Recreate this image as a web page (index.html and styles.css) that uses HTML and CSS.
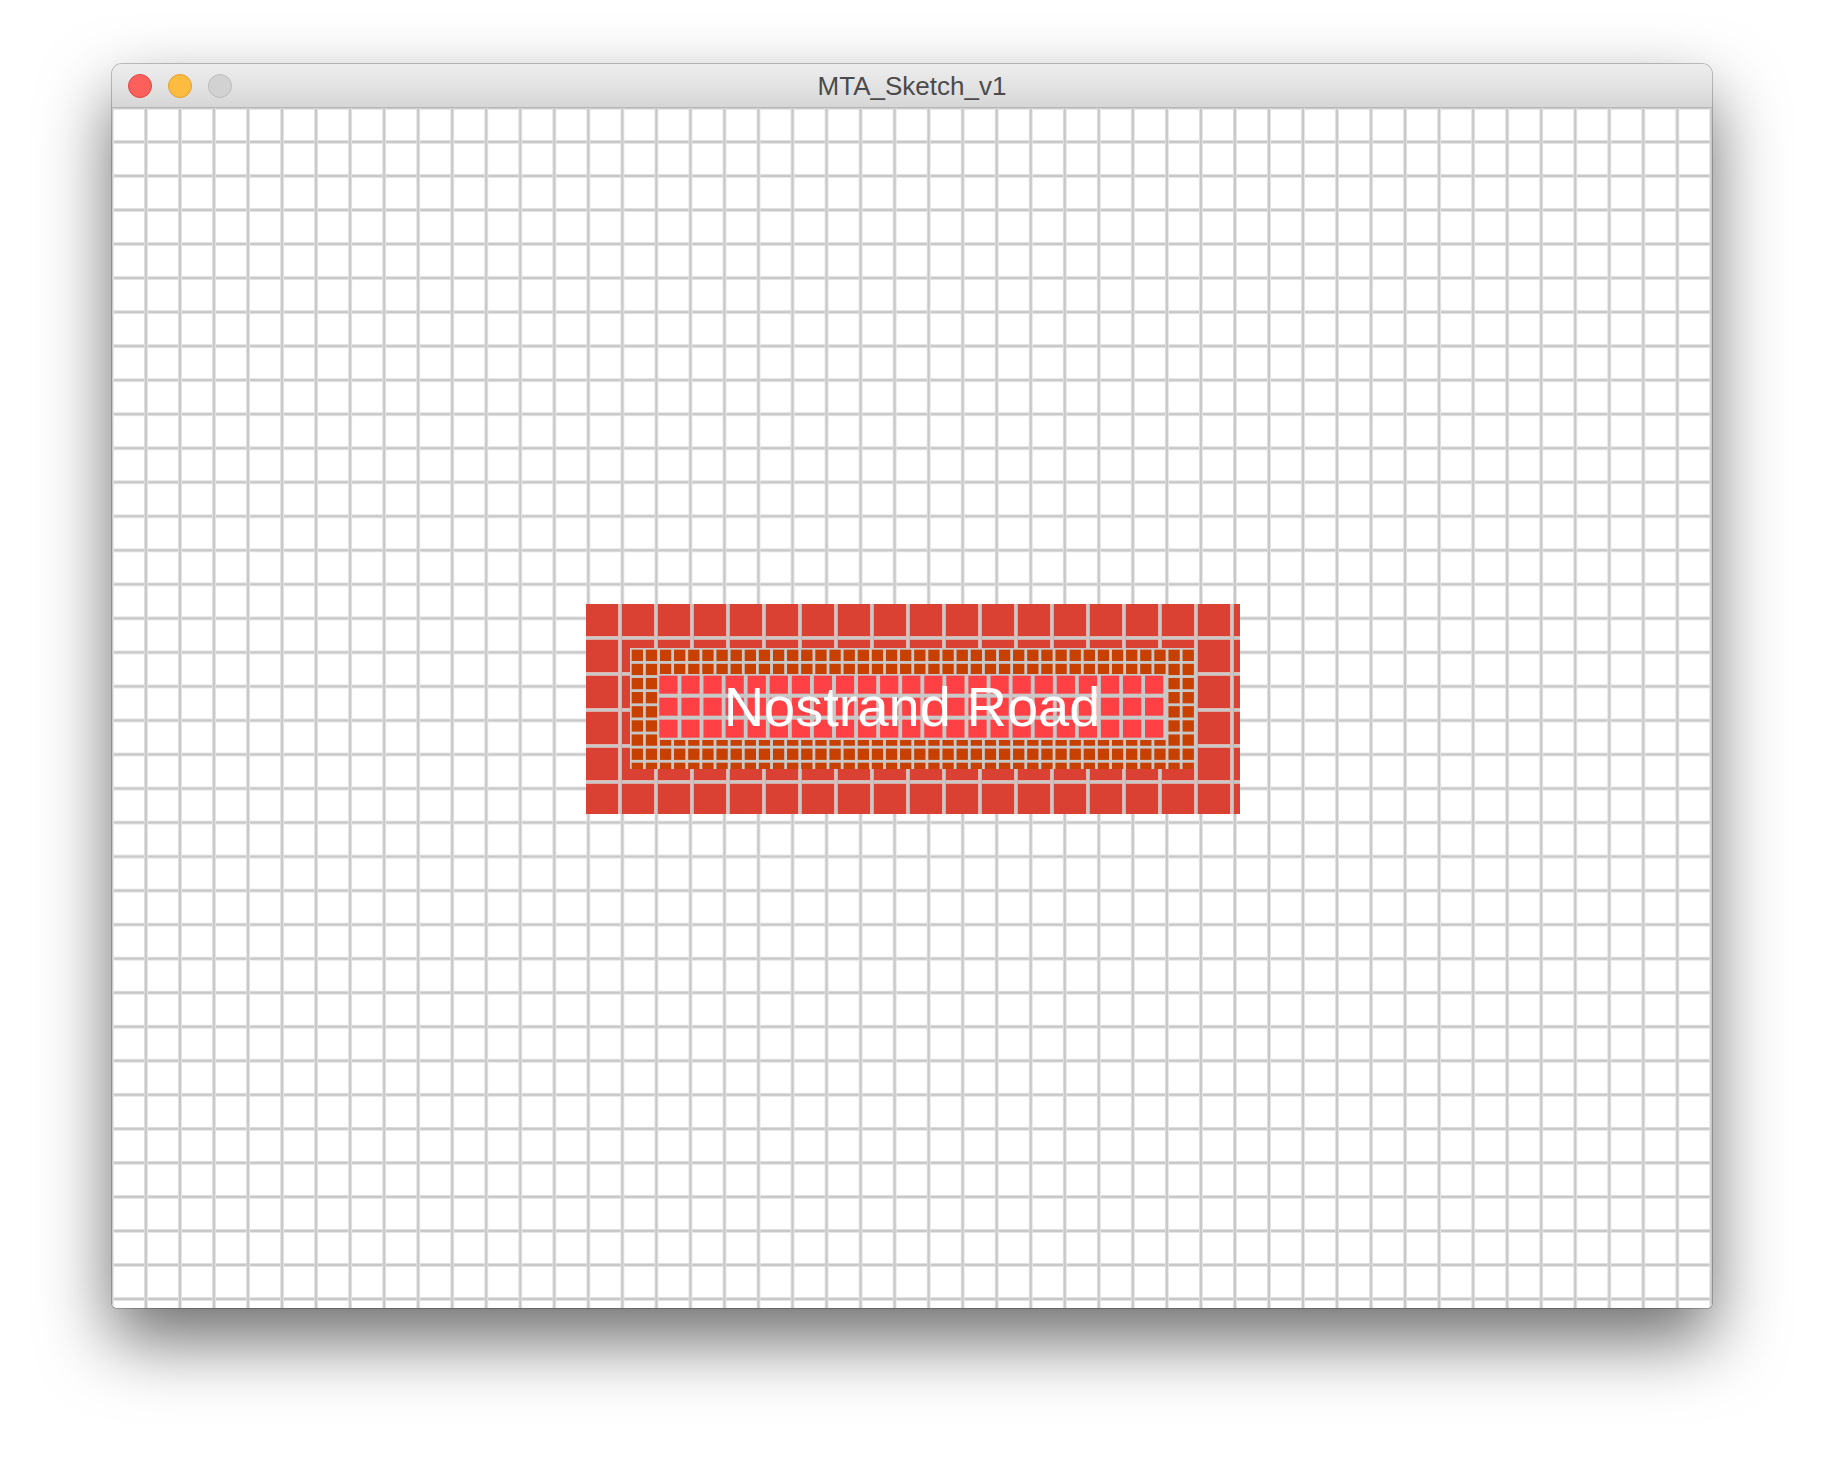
FILE: index.html
```html
<!DOCTYPE html>
<html>
<head>
<meta charset="utf-8">
<title>MTA_Sketch_v1</title>
<link rel="stylesheet" href="styles.css">
</head>
<body>
<div class="desktop">
  <div class="window">
    <div class="titlebar">
      <div class="lights">
        <span class="light light-close"></span>
        <span class="light light-min"></span>
        <span class="light light-zoom"></span>
      </div>
      <div class="title">MTA_Sketch_v1</div>
      <div class="spacer"></div>
    </div>
    <div class="canvas">
      <div class="sign">
        <div class="sign-band">
          <div class="sign-face">Nostrand Road</div>
        </div>
      </div>
    </div>
  </div>
</div>
</body>
</html>
```
FILE: styles.css
```css
html, body {
  margin: 0;
  padding: 0;
  background: #ffffff;
}

.desktop {
  width: 1824px;
  height: 1468px;
  padding: 64px 112px 0 112px;
  box-sizing: border-box;
  background: #ffffff;
}

.window {
  width: 1600px;
  border-radius: 10px 10px 5px 5px;
  overflow: hidden;
  background: #ffffff;
  box-shadow: 0 0 0 1px rgba(0, 0, 0, 0.22), 0 32px 70px 0 rgba(0, 0, 0, 0.58);
}

.titlebar {
  height: 43px;
  border-bottom: 1px solid #b6b6b6;
  background: linear-gradient(to bottom, #ededed 0%, #e3e3e3 50%, #d6d6d6 100%);
  display: grid;
  grid-template-columns: 1fr auto 1fr;
  align-items: center;
}

.lights {
  display: flex;
  gap: 16px;
  padding-left: 16px;
}

.light {
  width: 22px;
  height: 22px;
  border-radius: 50%;
  display: block;
}

.light-close {
  background: #fc605c;
  border: 1px solid #e0443e;
}

.light-min {
  background: #fdbc40;
  border: 1px solid #de9f2a;
}

.light-zoom {
  background: #d2d2d2;
  border: 1px solid #bcbcbc;
}

.title {
  font-family: "Liberation Sans", Arial, sans-serif;
  font-size: 26px;
  line-height: 43px;
  padding-top: 1px;
  color: #4b4b4b;
}

.canvas {
  height: 1200px;
  display: flex;
  align-items: flex-start;
  background-color: #ffffff;
  background-image:
    linear-gradient(to right, #dedede 0, #dedede 1px, #c8c8c8 1px, #c8c8c8 3px, #e4e4e4 3px, #e4e4e4 4px, transparent 4px),
    linear-gradient(to bottom, #dedede 0, #dedede 1px, #c8c8c8 1px, #c8c8c8 3px, #e4e4e4 3px, #e4e4e4 4px, transparent 4px);
  background-size: 34.0426px 100%, 100% 34.0426px;
  background-position: -2px 0, 0 -2px;
}

.sign {
  margin: 496px 0 0 474px;
  width: 654px;
  height: 210px;
  box-sizing: border-box;
  padding: 44px 45px 45px 44px;
  background-color: #db4132;
  background-image:
    linear-gradient(to right, transparent 0, transparent 32px, #e4b4ae 32px, #e4b4ae 33px, #c8c8c8 33px, #c8c8c8 35px, #d9a9a3 35px, #d9a9a3 36px),
    linear-gradient(to bottom, transparent 0, transparent 32px, #e4b4ae 32px, #e4b4ae 33px, #c8c8c8 33px, #c8c8c8 35px, #d9a9a3 35px, #d9a9a3 36px);
  background-size: 36px 100%, 100% 36px;
}

.sign-band {
  width: 565px;
  height: 121px;
  box-sizing: border-box;
  padding: 26px 29px 29px 28px;
  background-color: #c84000;
  background-image:
    linear-gradient(to right, transparent 0, transparent 11.6px, #c8c8c8 11.6px, #c8c8c8 14.125px),
    linear-gradient(to bottom, transparent 0, transparent 11.6px, #c8c8c8 11.6px, #c8c8c8 14.125px);
  background-size: 14.125px 100%, 100% 14.125px;
  background-position: 1.7px 0, 0 1.7px;
}

.sign-face {
  width: 508px;
  height: 66px;
  background-color: #ff4044;
  background-image:
    linear-gradient(to right, transparent 0, transparent 18.4px, #c8c8c8 18.4px, #c8c8c8 22.087px),
    linear-gradient(to bottom, transparent 0, transparent 18.4px, #c8c8c8 18.4px, #c8c8c8 22px);
  background-size: 22.087px 100%, 100% 22px;
  background-position: 1.3px 0, 0 1.7px;
  font-family: "Liberation Sans", Arial, sans-serif;
  font-size: 56px;
  line-height: 66px;
  color: #ffffff;
  text-align: center;
  white-space: nowrap;
}

.spacer {
  height: 1px;
}
```
